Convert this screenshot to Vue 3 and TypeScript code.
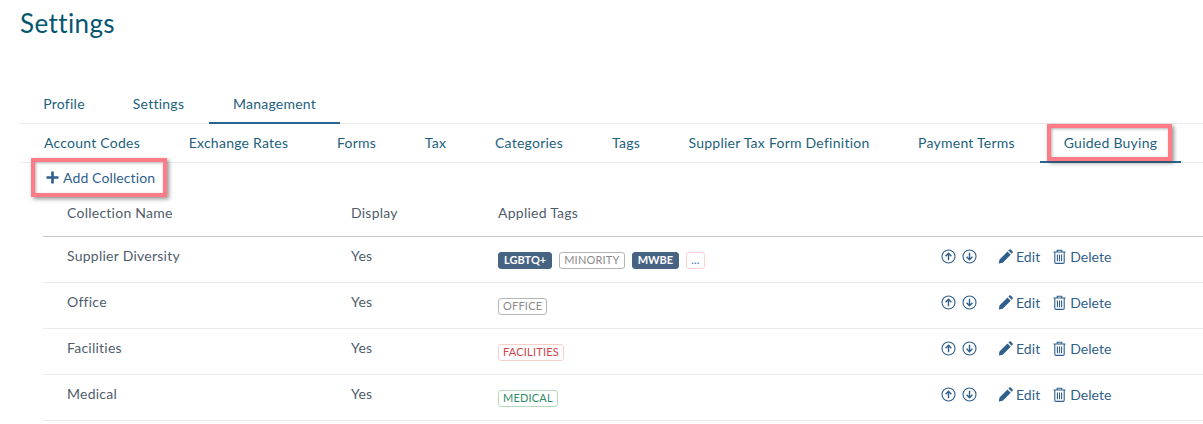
<script setup lang="ts">
interface NavTab {
  label: string
  width: number
}

interface Tag {
  label: string
  kind: "solid" | "grey" | "more" | "red" | "green"
}

interface Collection {
  name: string
  display: string
  tags: Tag[]
}

const mainTabs: NavTab[] = [
  { label: "Profile", width: 88 },
  { label: "Settings", width: 101 },
  { label: "Management", width: 131 },
]
const subTabs: NavTab[] = [
  { label: "Account Codes", width: 144 },
  { label: "Exchange Rates", width: 149 },
  { label: "Forms", width: 87 },
  { label: "Tax", width: 71 },
  { label: "Categories", width: 116 },
  { label: "Tags", width: 78 },
  { label: "Supplier Tax Form Definition", width: 228 },
  { label: "Payment Terms", width: 147 },
  { label: "Guided Buying", width: 141 },
]

const collections: Collection[] = [
  {
    name: "Supplier Diversity",
    display: "Yes",
    tags: [
      { label: "LGBTQ+", kind: "solid" },
      { label: "MINORITY", kind: "grey" },
      { label: "MWBE", kind: "solid" },
      { label: "...", kind: "more" },
    ],
  },
  { name: "Office", display: "Yes", tags: [{ label: "OFFICE", kind: "grey" }] },
  { name: "Facilities", display: "Yes", tags: [{ label: "FACILITIES", kind: "red" }] },
  { name: "Medical", display: "Yes", tags: [{ label: "MEDICAL", kind: "green" }] },
]
</script>

<template>
  <div class="page">
    <h1 class="title">Settings</h1>

    <nav class="tabs tabs--main">
      <a
        v-for="tab in mainTabs"
        :key="tab.label"
        class="tab"
        :class="{ 'tab--active': tab.label === 'Management' }"
        :style="{ width: `${tab.width}px` }"
      >{{ tab.label }}</a>
    </nav>
    <nav class="tabs tabs--sub">
      <a
        v-for="tab in subTabs"
        :key="tab.label"
        class="tab"
        :class="{ 'tab--active tab--marked': tab.label === 'Guided Buying' }"
        :style="{ width: `${tab.width}px` }"
      >{{ tab.label }}</a>
    </nav>

    <button class="add-btn" type="button">
      <svg width="13" height="13" viewBox="0 0 13 13">
        <path d="M5.2 0.5h2.6v4.7h4.7v2.6H7.8v4.7H5.2V7.8H0.5V5.2h4.7z" fill="#2f5f8c" />
      </svg>
      Add Collection
    </button>

    <div class="table">
      <div class="row row--head">
        <div>Collection Name</div>
        <div>Display</div>
        <div>Applied Tags</div>
        <div></div>
      </div>
      <div v-for="item in collections" :key="item.name" class="row">
        <div class="cell">{{ item.name }}</div>
        <div class="cell">{{ item.display }}</div>
        <div class="tags">
          <span v-for="tag in item.tags" :key="tag.label" class="tag" :class="`tag--${tag.kind}`">{{ tag.label }}</span>
        </div>
        <div class="actions">
          <svg class="arrow" width="15" height="15" viewBox="0 0 15 15">
            <circle cx="7.5" cy="7.5" r="6.5" fill="none" stroke="#2f5f8c" stroke-width="1.1" />
            <path d="M7.5 11.2V4.4M4.6 7.2l2.9-2.9 2.9 2.9" fill="none" stroke="#2f5f8c" stroke-width="1.4" />
          </svg>
          <svg class="arrow arrow--down" width="15" height="15" viewBox="0 0 15 15">
            <circle cx="7.5" cy="7.5" r="6.5" fill="none" stroke="#2f5f8c" stroke-width="1.1" />
            <path d="M7.5 3.8v6.8M4.6 7.8l2.9 2.9 2.9-2.9" fill="none" stroke="#2f5f8c" stroke-width="1.4" />
          </svg>
          <a class="action action--edit">
            <svg width="15" height="15" viewBox="0 0 15 15">
              <path d="M0.8 14.4l0.7-3.9 8-8 3.2 3.2-8 8zM10.4 1.6l1-1a1 1 0 0 1 1.4 0l1.8 1.8a1 1 0 0 1 0 1.4l-1 1z" fill="#2f5f8c" />
            </svg>
            Edit
          </a>
          <a class="action action--delete">
            <svg width="13" height="15" viewBox="0 0 13 15">
              <path d="M0.5 3h12M4.2 3V1.2h4.6V3M1.8 3v10.2c0 .7.5 1.2 1.2 1.2h7c.7 0 1.2-.5 1.2-1.2V3M4.4 5.4v6.8M6.5 5.4v6.8M8.6 5.4v6.8" fill="none" stroke="#2f5f8c" stroke-width="1.1" />
            </svg>
            Delete
          </a>
        </div>
      </div>
    </div>
  </div>
</template>

<style scoped>
.page {
  width: 1203px;
  height: 424px;
  overflow: hidden;
  background: #fff;
  font-family: Lato, "Open Sans", sans-serif;
  font-size: 14px;
  letter-spacing: 0.25px;
  color: #4f5d6b;
}

.title {
  margin: 0;
  padding: 8px 0 0 20px;
  height: 84px;
  box-sizing: border-box;
  font-size: 26px;
  line-height: 30px;
  font-weight: 400;
  letter-spacing: 0.4px;
  color: #06566f;
}

.tabs {
  display: flex;
  margin-left: 20px;
  border-bottom: 1px solid #eaeaea;
  box-sizing: border-box;
}

.tabs--main {
  height: 40px;
}

.tabs--sub {
  height: 39px;
}

.tab {
  position: relative;
  flex: none;
  box-sizing: border-box;
  text-align: center;
  line-height: 37px;
  color: #1d5f7c;
  white-space: nowrap;
}

.tabs--main .tab {
  line-height: 40px;
}

.tab--active {
  border-bottom: 2px solid #2a6592;
  height: 40px;
}

.tabs--sub .tab--active {
  height: 39px;
}

.tab--marked::after {
  content: "";
  position: absolute;
  left: 7px;
  right: 9px;
  top: 0;
  bottom: 0;
  border: 4px solid #ff7b88;
  box-shadow: 2px 2px 4px rgba(60, 60, 60, 0.55), inset 1px 1px 3px rgba(60, 60, 60, 0.4);
}

.add-btn {
  display: flex;
  align-items: center;
  gap: 4px;
  width: 136px;
  height: 39px;
  margin: -5px 0 0 31px;
  padding: 0 0 0 11px;
  position: relative;
  box-sizing: border-box;
  background: #fff;
  border: 4px solid #ff7b88;
  box-shadow: 2px 2px 4px rgba(60, 60, 60, 0.55), inset 1px 1px 3px rgba(60, 60, 60, 0.4);
  font: inherit;
  letter-spacing: 0.12px;
  color: #2f5f8c;
}

.table {
  margin-left: 43px;
}

.row {
  display: grid;
  grid-template-columns: 284px 147px 443px 1fr;
  height: 46px;
  padding-left: 24px;
  border-bottom: 1px solid #ececec;
  box-sizing: border-box;
}

.row--head {
  height: 40px;
  align-items: center;
  padding-bottom: 8px;
  border-bottom: 1px solid #c9c9c9;
}

.cell {
  padding-top: 9px;
  line-height: 20px;
}

.tags {
  display: flex;
  align-items: flex-start;
  gap: 7px;
  padding-top: 15px;
}

.tag {
  height: 17px;
  padding: 0 4px;
  border: 1px solid #b5b5b5;
  border-radius: 3px;
  box-sizing: border-box;
  font-size: 11px;
  line-height: 14px;
  color: #8a8a8a;
  letter-spacing: 0.2px;
}

.tag--solid {
  padding: 0 5px;
  background: #476384;
  border-color: #476384;
  color: #fff;
  font-weight: 700;
  letter-spacing: 0;
}

.tag--more {
  border-color: #ffd2cf;
  color: #2f6fa8;
}

.tag--red {
  border-color: #f6cfcb;
  color: #d0434c;
}

.tag--green {
  border-color: #b4d8b8;
  color: #2e8a66;
}

.actions {
  display: flex;
  align-items: center;
  height: 22px;
  margin-top: 8px;
  color: #2f5f8c;
  letter-spacing: 0.05px;
}

.arrow {
  margin-top: 1px;
  margin-right: 6px;
}

.arrow--down {
  margin-right: 21px;
}

.action {
  display: flex;
  align-items: center;
  gap: 3px;
  margin-right: 13px;
}

.action--delete {
  gap: 4px;
}
</style>

<style>
html,
body {
  margin: 0;
  background: #fff;
}
</style>
